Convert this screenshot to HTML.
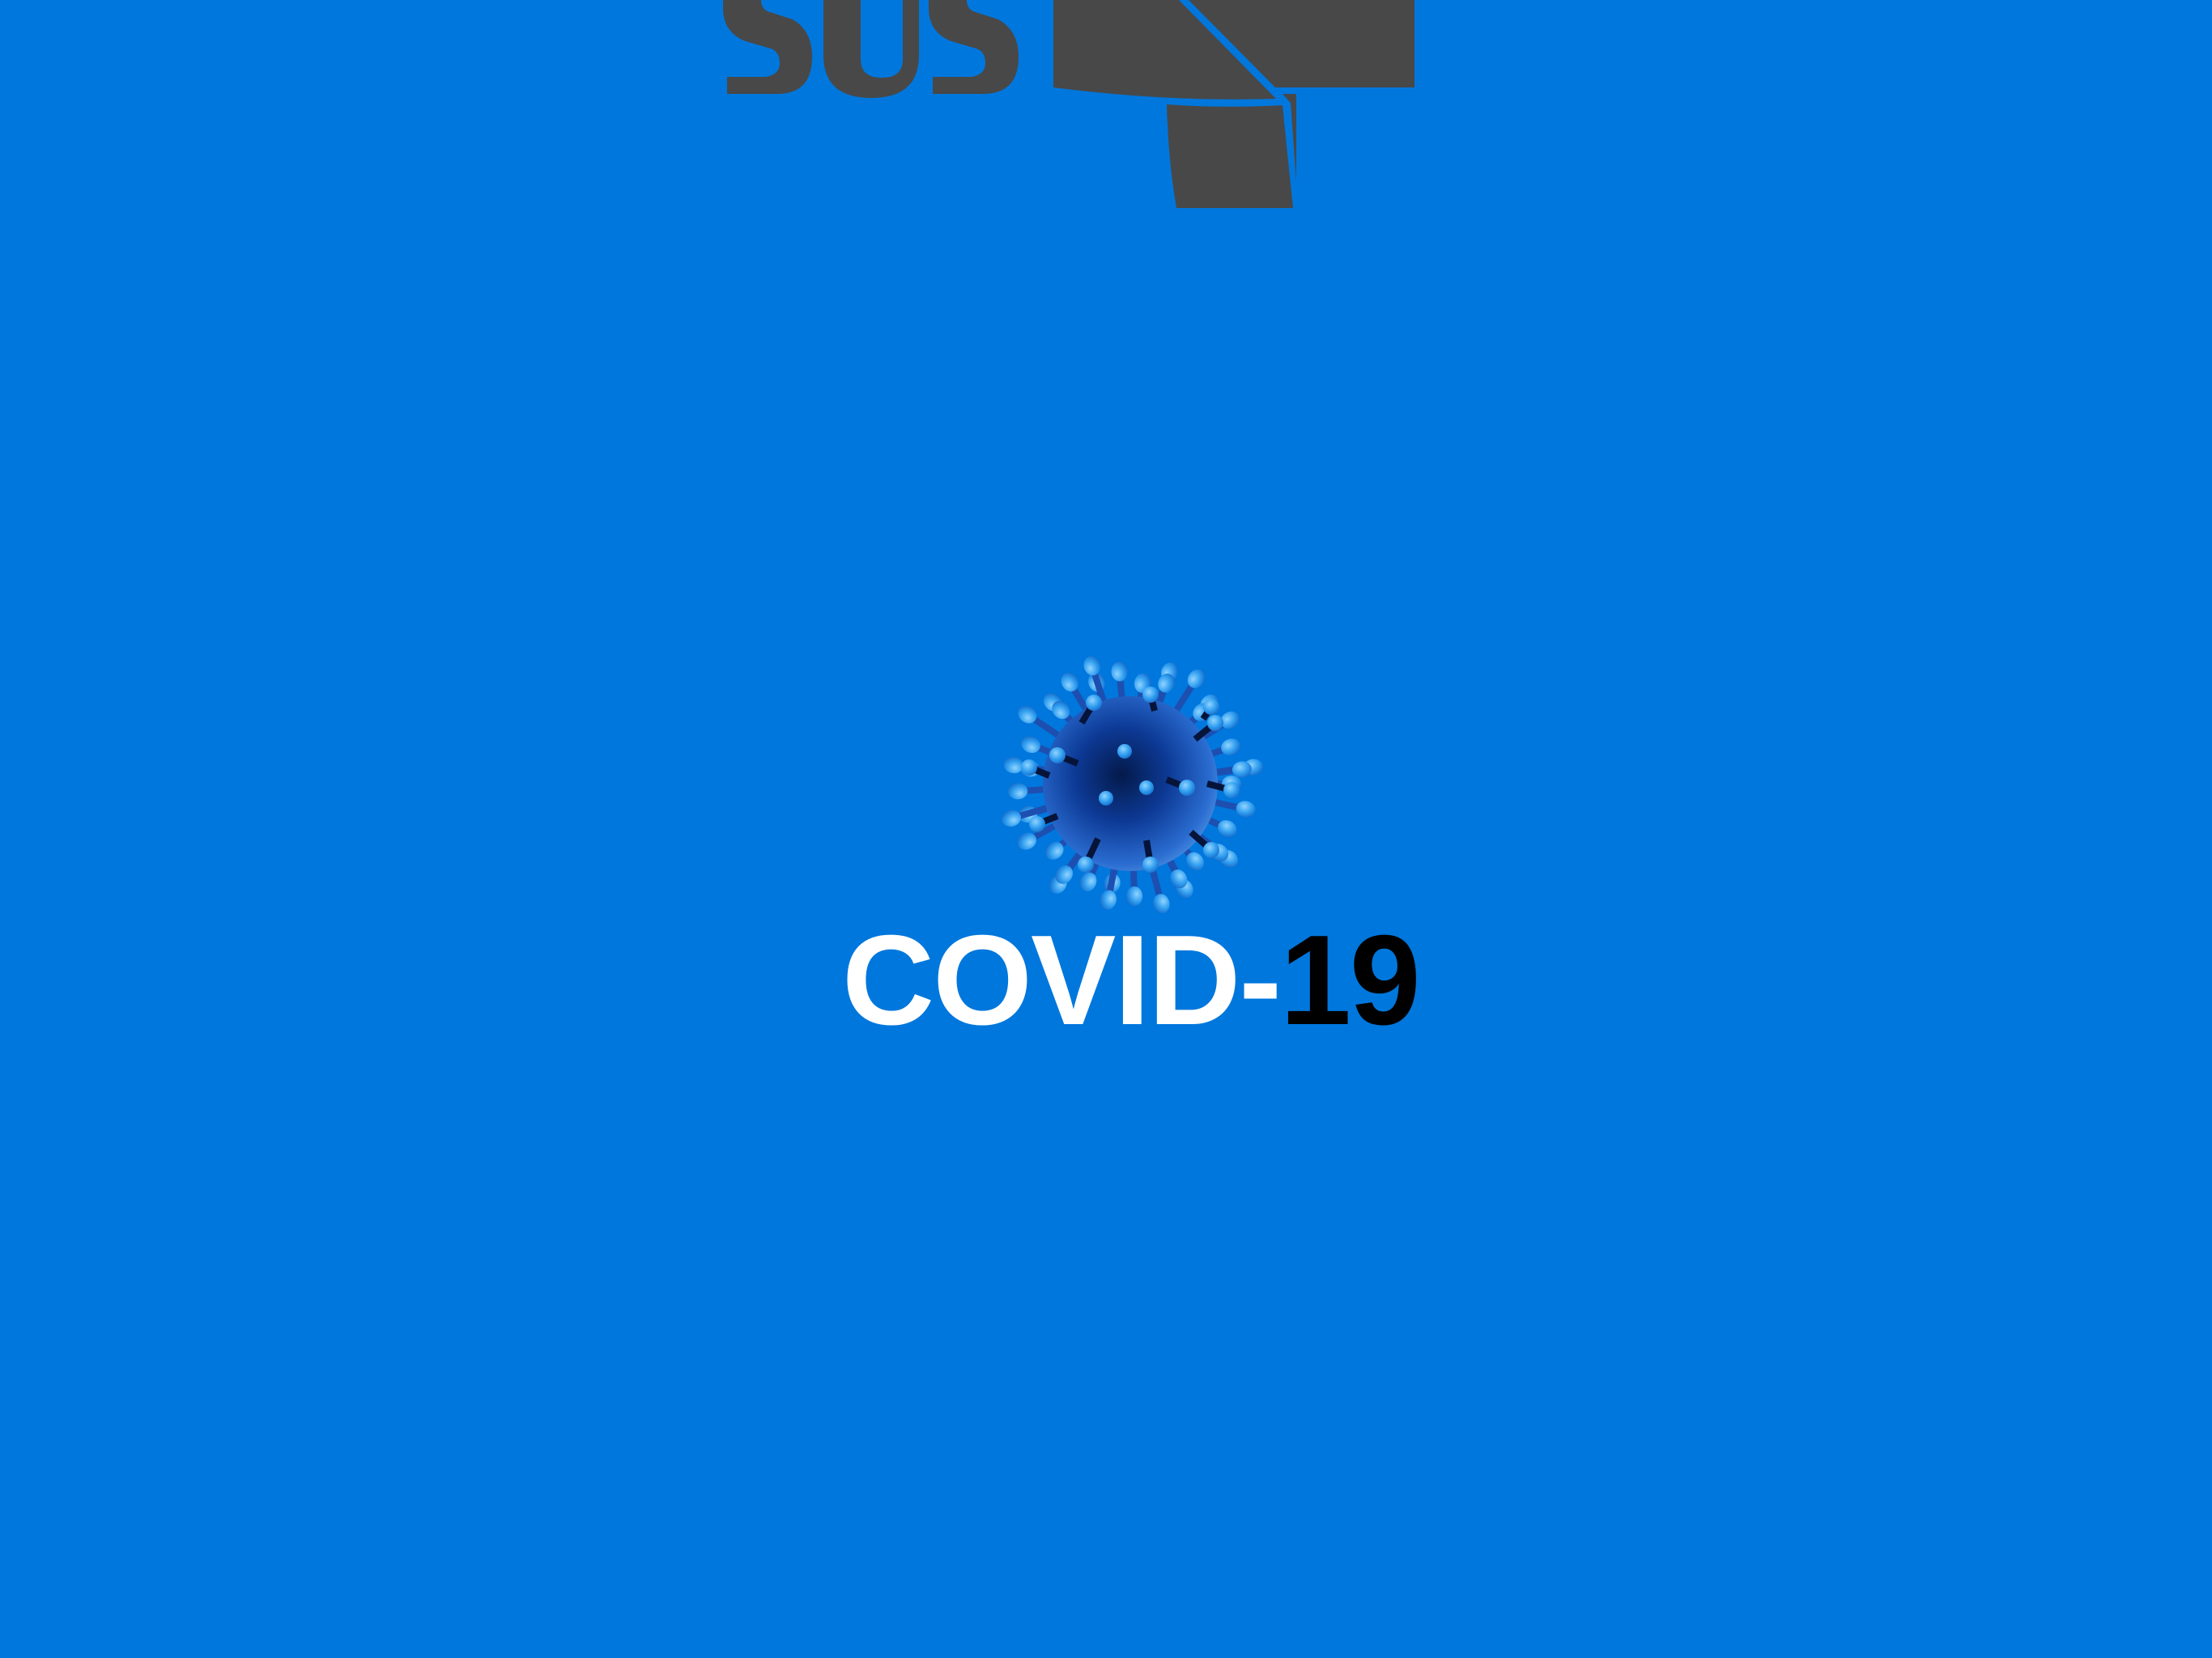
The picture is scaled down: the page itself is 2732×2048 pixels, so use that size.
<!DOCTYPE html>
<html><head><meta charset="utf-8"><style>
html,body{margin:0;padding:0;background:#0077dd;width:2732px;height:2048px;overflow:hidden}
svg{position:absolute;left:0;top:0}
.t{position:absolute;left:1040px;top:1132px;font-family:"Liberation Sans",Arial,sans-serif;font-weight:bold;font-size:158px;letter-spacing:-2px;color:#fff;line-height:1;white-space:nowrap}
.t span{color:#000}
</style></head><body>
<svg width="2732" height="2048" viewBox="0 0 2732 2048">
<defs>
<radialGradient id="body" cx="0.45" cy="0.45" r="0.6">
<stop offset="0" stop-color="#041a4a"/>
<stop offset="0.45" stop-color="#0d3a96"/>
<stop offset="0.85" stop-color="#2a6cd0"/>
<stop offset="1" stop-color="#4a8fe0"/>
</radialGradient>
<radialGradient id="tip" cx="0.4" cy="0.35" r="0.7">
<stop offset="0" stop-color="#8fd4ff"/>
<stop offset="0.6" stop-color="#2e9cef"/>
<stop offset="1" stop-color="#1a6cc8"/>
</radialGradient>
</defs>
<g fill="#484848">
<path d="M893,0 L940,0 Q940,10 948,14 L979,24 Q1003,38 1003,70 Q1003,116 960,116 L898,116 L898,95 L946,95 Q963,92 963,78 Q963,64 952,60 L921,51 Q893,40 893,10 Z"/>
<path d="M1147,0 L1194,0 Q1194,10 1202,14 L1233,24 Q1258,38 1258,70 Q1258,116 1214,116 L1152,116 L1152,95 L1200,95 Q1217,92 1217,78 Q1217,64 1206,60 L1175,51 Q1147,40 1147,10 Z"/>
<path d="M1017,0 L1063,0 L1063,73 Q1063,96 1089,96 Q1115,96 1115,73 L1115,0 L1135,0 L1135,68 Q1135,121 1076,121 Q1017,121 1017,68 Z"/>
<path d="M1301,0 L1456,0 L1576,122 Q1440,126 1301,108 Z"/>
<path d="M1468,0 L1747,0 L1747,108 L1575,108 Z"/>
<path d="M1441,129 Q1510,134 1584,130 L1597,257 L1453,257 Q1443,200 1441,129 Z"/>
<path d="M1584,116 L1601,116 L1601,225 L1594,127 Z"/>
</g>
<g id="virus"></g>
</svg>
<div class="t">COVID-<span>19</span></div>
<script>
(function(){
var g=document.getElementById('virus'),cx=1396,cy=968;
var back='',front='';
var n=40;
for(var i=0;i<n;i++){
 var a=i*2*Math.PI/n+((i*37)%7)*0.03;
 var L=125+((i*53)%5)*7;
 var x1=cx+Math.cos(a)*95,y1=cy+Math.sin(a)*95;
 var x2=cx+Math.cos(a)*L,y2=cy+Math.sin(a)*L;
 back+='<line x1="'+x1+'" y1="'+y1+'" x2="'+x2+'" y2="'+y2+'" stroke="#1d4fb0" stroke-width="8"/>';
 back+='<ellipse cx="'+x2+'" cy="'+y2+'" rx="12" ry="10" transform="rotate('+(a*180/Math.PI)+' '+x2+' '+y2+')" fill="url(#tip)"/>';
}
var body='<ellipse cx="'+cx+'" cy="'+cy+'" rx="108" ry="108" fill="url(#body)"/>';
var f=[[-60,-75,-45,-100],[30,-90,25,-110],[80,-55,105,-75],[95,0,125,8],[75,60,100,82],[20,70,25,100],[-40,68,-55,100],[-90,40,-115,50],[-100,-10,-125,-20],[-65,-25,-90,-35],[45,-5,70,5],[90,-80,100,-95]];
for(var j=0;j<f.length;j++){var p=f[j];
 front+='<line x1="'+(cx+p[0])+'" y1="'+(cy+p[1])+'" x2="'+(cx+p[2])+'" y2="'+(cy+p[3])+'" stroke="#06143a" stroke-width="8"/>';
 front+='<circle cx="'+(cx+p[2])+'" cy="'+(cy+p[3])+'" r="10" fill="url(#tip)"/>';}
var dots=[[-7,-40],[20,5],[-30,18]];
for(var k=0;k<dots.length;k++) front+='<circle cx="'+(cx+dots[k][0])+'" cy="'+(cy+dots[k][1])+'" r="9" fill="url(#tip)"/>';
g.innerHTML=back+body+front;
})();
</script>
</body></html>
